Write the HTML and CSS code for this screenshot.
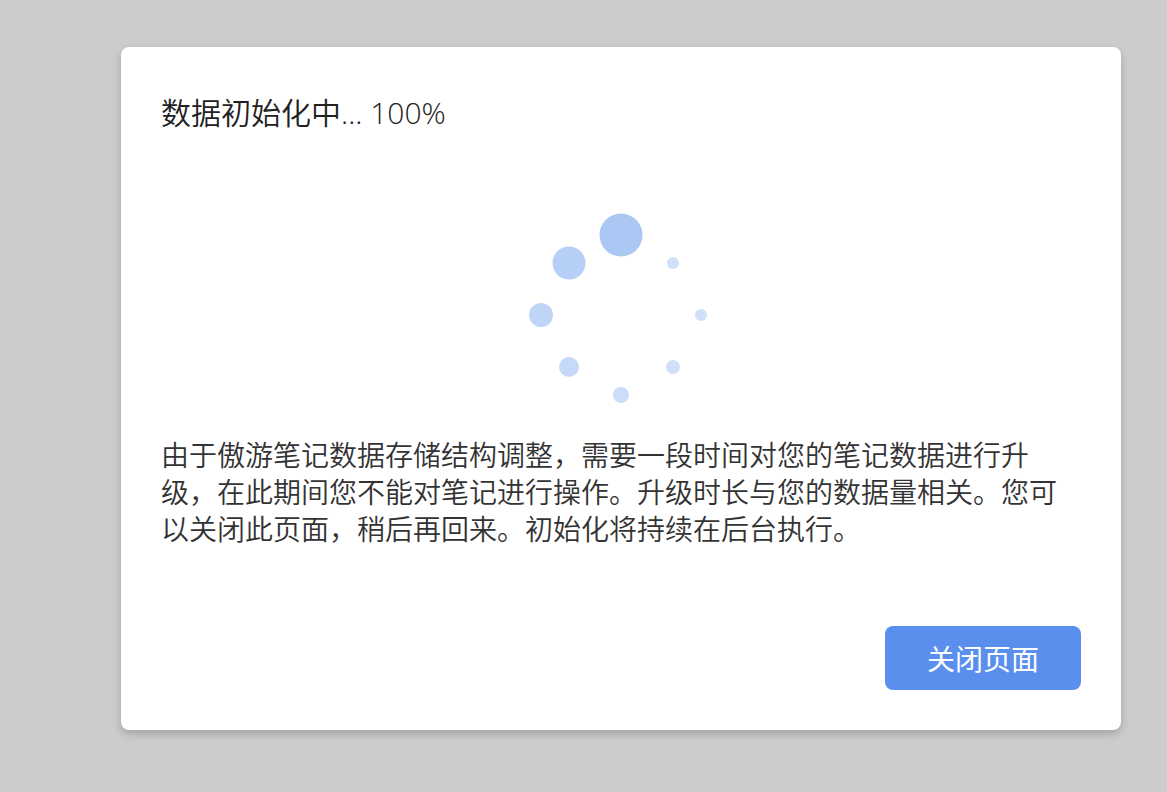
FILE: index.html
```html
<!DOCTYPE html>
<html lang="zh-CN">
<head>
<meta charset="utf-8">
<title>数据初始化</title>
<link rel="stylesheet" href="styles.css">
</head>
<body>
<main class="overlay">
  <section class="dialog" role="dialog" aria-labelledby="dialog-title">
    <h1 class="dialog-title" id="dialog-title">数据初始化中... 100%</h1>
    <svg class="spinner" viewBox="0 0 200 200" aria-hidden="true">
      <circle cx="100" cy="20" r="21.5" fill="#abc7f3"/>
      <circle cx="48" cy="48" r="16.5" fill="#b6cff6"/>
      <circle cx="20" cy="100" r="12" fill="#c0d5f6"/>
      <circle cx="48" cy="152" r="10" fill="#c6d9f8"/>
      <circle cx="100" cy="180" r="8" fill="#ccddf9"/>
      <circle cx="152" cy="152" r="7" fill="#cfdff9"/>
      <circle cx="180" cy="100" r="6" fill="#d0e0f9"/>
      <circle cx="152" cy="48" r="6" fill="#d0e0f9"/>
    </svg>
    <p class="dialog-text">由于傲游笔记数据存储结构调整，需要一段时间对您的笔记数据进行升级，在此期间您不能对笔记进行操作。升级时长与您的数据量相关。您可以关闭此页面，稍后再回来。初始化将持续在后台执行。</p>
    <footer class="dialog-actions">
      <button class="button" type="button">关闭页面</button>
    </footer>
  </section>
</main>
</body>
</html>
```
FILE: styles.css
```css
* {
  box-sizing: border-box;
}

body {
  margin: 0;
  background: #ccc;
  color: #333;
  font-family: "Open Sans", "Noto Sans CJK SC", sans-serif;
}

.overlay {
  min-height: 100vh;
  padding: 47px 46px 62px 121px;
}

.dialog {
  display: flex;
  flex-direction: column;
  padding: 40px;
  border-radius: 8px;
  background: #fff;
  box-shadow: 0 4px 8px rgba(0, 0, 0, 0.2);
}

.dialog-title {
  margin: 0;
  color: #212121;
  font-size: 30px;
  font-weight: 350;
  line-height: 52px;
}

.spinner {
  align-self: center;
  width: 200px;
  height: 200px;
  margin: 76px 0 22px;
  overflow: visible;
}

.dialog-text {
  margin: 0;
  font-size: 28px;
  font-weight: 350;
  line-height: 37px;
}

.dialog-actions {
  display: flex;
  justify-content: flex-end;
  margin-top: 78px;
}

.button {
  min-width: 196px;
  height: 64px;
  padding: 0 40px;
  border: 0;
  border-radius: 8px;
  background: #5a8fee;
  color: #fff;
  font-family: "Noto Sans CJK SC", sans-serif;
  font-size: 28px;
  font-weight: 400;
}
```
